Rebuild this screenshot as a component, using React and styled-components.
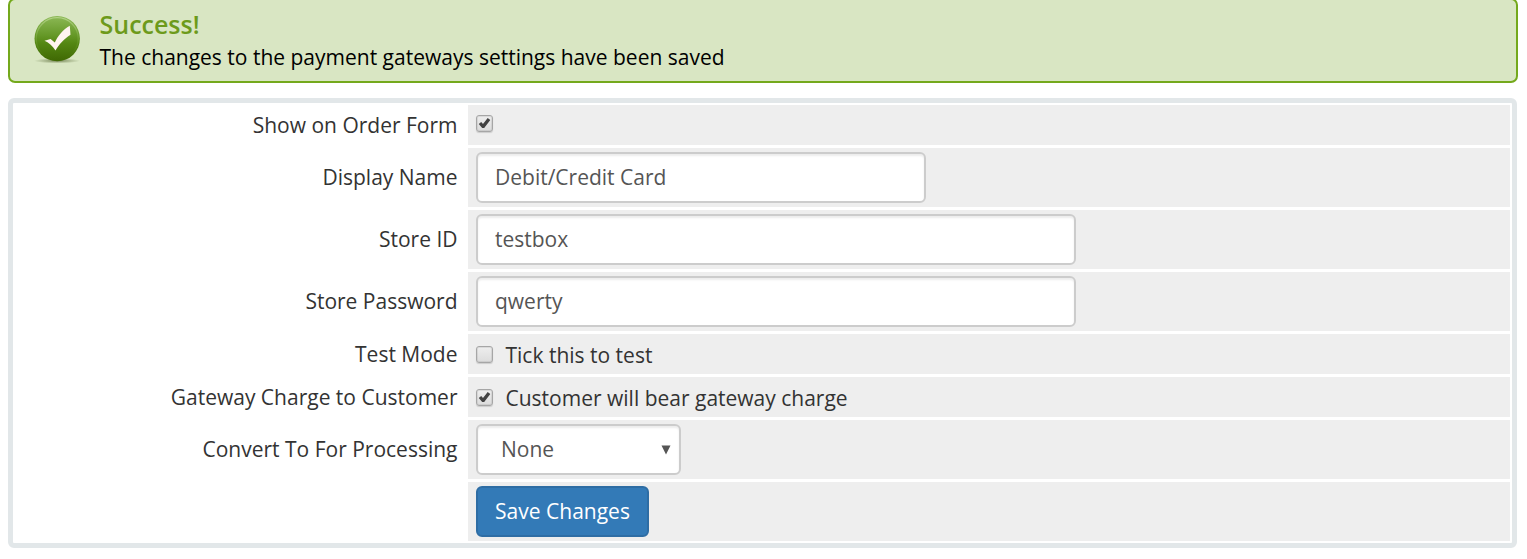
import React from "react";
import styled, { createGlobalStyle } from "styled-components";

const GlobalStyle = createGlobalStyle`
  *, *::before, *::after { box-sizing: border-box; }
  html, body { margin: 0; background: #fff; overflow: hidden; }
  body { font-family: "Open Sans", "Noto Sans", sans-serif; font-size: 21px; line-height: 30px; color: #333; }
`;

const Page = styled.main`
  display: flex;
  flex-direction: column;
  gap: 15px;
  height: 559px;
  padding: 0 10px 11px 8px;
`;

const Alert = styled.section`
  display: flex;
  flex: none;
  align-items: flex-start;
  gap: 18px;
  height: 85px;
  margin: -2px 0 0;
  width: 1510px;
  padding: 12px 22px 0 21.5px;
  border: 2px solid #74a91c;
  border-radius: 7px;
  background: #d9e6c3;
`;

const AlertIcon = styled.svg`
  flex: none;
  width: 50px;
  height: 54px;
  margin-top: -2px;
`;

const AlertBody = styled.div`
  display: flex;
  flex-direction: column;
  color: #000;
`;

const AlertTitle = styled.strong`
  height: 30px;
  font-size: 25px;
  font-weight: 600;
  line-height: 24px;
  color: #6d9a1b;
`;

const AlertText = styled.span`
  line-height: 30px;
`;

const Form = styled.form`
  display: flex;
  flex-direction: column;
  gap: 3px;
  height: 450px;
  padding: 2px;
  border: 5px solid #e2e7e9;
  border-radius: 6px;
`;

const Row = styled.div`
  display: grid;
  grid-template-columns: 453px 1042px;
  height: ${(p) => (p.$compact ? 40 : 59)}px;
`;

const Label = styled.div`
  display: flex;
  align-items: center;
  justify-content: flex-end;
  padding: 0 10.5px ${(p) => (p.$compact ? 0 : 2)}px 0;
  white-space: nowrap;
`;

const Field = styled.div`
  display: flex;
  align-items: center;
  padding: 0 8px;
  background: #eee;
`;

const TextInput = styled.input`
  width: ${(p) => p.$width}px;
  height: 51px;
  padding: 0 17px 2px;
  border: 2px solid #ccc;
  border-radius: 6px;
  background: #fff;
  box-shadow: inset 0 2px 2px rgba(0, 0, 0, 0.075);
  color: #555;
  font: inherit;
  outline: none;
`;

const CheckLabel = styled.label`
  display: flex;
  align-items: center;
  gap: 12.5px;
  height: 40px;
  padding-top: 1px;
  white-space: nowrap;
`;

const CheckBox = styled.span`
  display: flex;
  flex: none;
  width: 17px;
  height: 17px;
  margin-bottom: ${(p) => (p.$inline ? 1 : 3)}px;
  border: 1px solid #a6a6a6;
  border-radius: 3px;
  background: linear-gradient(#eeeeee, #dcdcdc);
  box-shadow: 0 1px 1px rgba(0, 0, 0, 0.14), inset 0 0 0 1px rgba(150, 150, 150, 0.22);
`;

const CheckText = styled.span`
  padding-top: 1px;
`;

const Select = styled.div`
  display: flex;
  align-items: center;
  justify-content: space-between;
  width: 205px;
  height: 51px;
  padding: 0 8px 2px 23px;
  border: 2px solid #ccc;
  border-radius: 6px;
  background: #fff;
  box-shadow: inset 0 2px 2px rgba(0, 0, 0, 0.075);
  color: #555;
`;

const SelectArrow = styled.svg`
  width: 10px;
  height: 10px;
  margin-top: 2px;
`;

const SaveButton = styled.button`
  width: 173px;
  height: 51px;
  padding: 0 0 2px;
  border: 2px solid #2e6da4;
  border-radius: 6px;
  background: #337ab7;
  color: #fff;
  font: inherit;
  white-space: nowrap;
`;

function SuccessIcon() {
  return (
    <AlertIcon viewBox="0 0 50 54" aria-hidden="true">
      <defs>
        <linearGradient id="ball" x1="0" y1="0" x2="0" y2="1">
          <stop offset="0" stopColor="#8db957" />
          <stop offset="0.43" stopColor="#659827" />
          <stop offset="0.6" stopColor="#548713" />
          <stop offset="1" stopColor="#3f6803" />
        </linearGradient>
        <linearGradient id="rim" x1="0" y1="0" x2="0" y2="1">
          <stop offset="0" stopColor="#b2d386" />
          <stop offset="0.65" stopColor="#6e9d2e" stopOpacity="0.4" />
          <stop offset="1" stopColor="#4c7a0b" stopOpacity="0" />
        </linearGradient>
        <radialGradient id="shade">
          <stop offset="0" stopColor="#35470f" stopOpacity="0.6" />
          <stop offset="1" stopColor="#35470f" stopOpacity="0" />
        </radialGradient>
      </defs>
      <ellipse cx="25" cy="50.8" rx="23" ry="2.6" fill="url(#shade)" />
      <circle cx="25.2" cy="28.6" r="22.7" fill="url(#ball)" />
      <circle cx="25.2" cy="28.6" r="21" fill="none" stroke="url(#rim)" strokeWidth="1.2" />
      <path d="M12.5 30.8 L18.6 29 L22.8 32.6 C25.6 26 31 19.5 37.8 15.7 L38.5 24.8 C32.5 28.5 27 34.5 23.5 40.5 C20.5 36 16.5 32.5 12.5 30.8 Z" fill="#fff4f1" />
    </AlertIcon>
  );
}

function Check({ checked, inline }) {
  return (
    <CheckBox role="checkbox" aria-checked={checked} $inline={inline}>
      {checked && (
        <svg width="15" height="15" viewBox="0 0 15 15">
          <path d="M1.8 8 L4.2 6.1 L6 8.1 L10.7 2 L13.3 3.9 L7.2 12 L5.2 12 Z" fill="#424242" />
        </svg>
      )}
    </CheckBox>
  );
}

function FormRow({ label, compact, children }) {
  return (
    <Row $compact={compact}>
      <Label $compact={compact}>{label}</Label>
      <Field>{children}</Field>
    </Row>
  );
}

export default function App() {
  return (
    <>
      <GlobalStyle />
      <Page>
        <Alert>
          <SuccessIcon />
          <AlertBody>
            <AlertTitle>Success!</AlertTitle>
            <AlertText>The changes to the payment gateways settings have been saved</AlertText>
          </AlertBody>
        </Alert>
        <Form>
          <FormRow label="Show on Order Form" compact><Check checked /></FormRow>
          <FormRow label="Display Name"><TextInput $width={450} defaultValue="Debit/Credit Card" /></FormRow>
          <FormRow label="Store ID"><TextInput $width={600} defaultValue="testbox" /></FormRow>
          <FormRow label="Store Password"><TextInput $width={600} defaultValue="qwerty" /></FormRow>
          <FormRow label="Test Mode" compact>
            <CheckLabel><Check inline checked={false} /><CheckText>Tick this to test</CheckText></CheckLabel>
          </FormRow>
          <FormRow label="Gateway Charge to Customer" compact>
            <CheckLabel><Check inline checked /><CheckText>Customer will bear gateway charge</CheckText></CheckLabel>
          </FormRow>
          <FormRow label="Convert To For Processing">
            <Select>
              None
              <SelectArrow viewBox="0 0 10 10"><path d="M0.5 0.5H9.5L5 9.5Z" fill="#555" /></SelectArrow>
            </Select>
          </FormRow>
          <FormRow><SaveButton type="button">Save Changes</SaveButton></FormRow>
        </Form>
      </Page>
    </>
  );
}
